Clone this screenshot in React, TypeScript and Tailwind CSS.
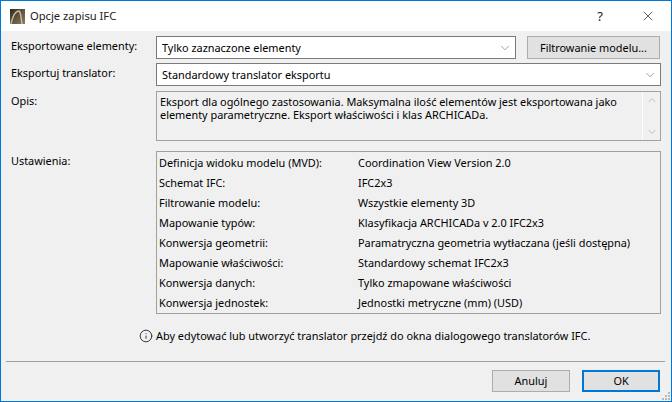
import { ChevronDown, ChevronUp, Info, X } from "lucide-react";

const settings = [
  ["Definicja widoku modelu (MVD):", "Coordination View Version 2.0"],
  ["Schemat IFC:", "IFC2x3"],
  ["Filtrowanie modelu:", "Wszystkie elementy 3D"],
  ["Mapowanie typów:", "Klasyfikacja ARCHICADa v 2.0 IFC2x3"],
  ["Konwersja geometrii:", "Paramatryczna geometria wytłaczana (jeśli dostępna)"],
  ["Mapowanie właściwości:", "Standardowy schemat IFC2x3"],
  ["Konwersja danych:", "Tylko zmapowane właściwości"],
  ["Konwersja jednostek:", "Jednostki metryczne (mm) (USD)"],
];

function Combo({ value, className }: { value: string; className: string }) {
  return (
    <div className={`h-[23px] bg-white border border-[#7a7a7a] flex items-center justify-between pl-[5px] pr-[3px] ${className}`}>
      <span>{value}</span>
      <ChevronDown size={14} strokeWidth={1} className="text-[#606060]" />
    </div>
  );
}

export default function App() {
  return (
    <div className="w-[672px] h-[402px] border border-[#0078d7] bg-[#f0f0f0] flex flex-col text-[10.9px] leading-4 text-black font-['Noto_Sans',sans-serif] overflow-hidden relative">
      {/* Title bar */}
      <div className="h-[30px] bg-white flex items-center shrink-0">
        <svg width="15" height="15" viewBox="0 0 15 15" className="ml-[9px]">
          <defs>
            <linearGradient id="logo" x1="0" y1="0" x2="1" y2="1">
              <stop offset="0" stopColor="#2e2a20" />
              <stop offset="1" stopColor="#8f7d5c" />
            </linearGradient>
          </defs>
          <rect width="15" height="15" fill="url(#logo)" />
          <path d="M1 15 C3 6 6 2 9 2 C11 3 11 9 12 15" fill="none" stroke="#c9bc9e" strokeWidth="1.4" />
        </svg>
        <span className="ml-[5px] text-[11.2px] text-[#222]">Opcje zapisu IFC</span>
        <span className="ml-auto mr-[37px] text-[13px] text-[#222]">?</span>
        <X size={16} strokeWidth={1} className="mr-[15px] text-[#111]" />
      </div>

      {/* Form */}
      <div className="flex flex-col pl-[10px] pr-[10px] pt-[5px]">
        <div className="flex">
          <span className="w-[145px] shrink-0 pt-[2px]">Eksportowane elementy:</span>
          <Combo value="Tylko zaznaczone elementy" className="w-[360px]" />
          <button className="ml-[11px] w-[133px] h-[23px] bg-[#e1e1e1] border border-[#adadad]">Filtrowanie modelu...</button>
        </div>
        <div className="flex mt-[4px]">
          <span className="w-[145px] shrink-0 pt-[2px]">Eksportuj translator:</span>
          <Combo value="Standardowy translator eksportu" className="w-[505px]" />
        </div>
        <div className="flex mt-[5px]">
          <span className="w-[145px] shrink-0 pt-[2px]">Opis:</span>
          <div className="w-[505px] h-[50px] border border-[#a0a0a0] flex">
            <p className="flex-1 pl-[3px] pt-[3px] leading-[13px]">
              Eksport dla ogólnego zastosowania. Maksymalna ilość elementów jest eksportowana jako elementy parametryczne. Eksport właściwości i klas ARCHICADa.
            </p>
            <div className="w-[18px] shrink-0 border-l border-white flex flex-col items-center justify-between py-[2px] text-[#b0b0b0]">
              <ChevronUp size={12} strokeWidth={1.5} />
              <ChevronDown size={12} strokeWidth={1.5} />
            </div>
          </div>
        </div>
        <div className="flex mt-[10px]">
          <span className="w-[145px] shrink-0 pt-[2px]">Ustawienia:</span>
          <div className="w-[505px] h-[163px] border border-[#a0a0a0] pt-[1px] pl-[2px]">
            {settings.map(([name, value]) => (
              <div key={name} className="flex items-center h-[20px]">
                <span className="w-[199px] shrink-0">{name}</span>
                <span>{value}</span>
              </div>
            ))}
          </div>
        </div>
        <div className="flex items-center mt-[14px] ml-[128px] h-[16px]">
          <Info size={14} strokeWidth={1.5} className="text-[#222] mr-[3px]" />
          <span>Aby edytować lub utworzyć translator przejdź do okna dialogowego translatorów IFC.</span>
        </div>
      </div>

      {/* Footer */}
      <div className="ml-[5px] mr-[6px] mt-[17px] border-t border-[#a0a0a0]" />
      <div className="flex justify-end gap-[12px] pt-[8px] pr-[11px]">
        <button className="w-[78px] h-[22px] bg-[#e1e1e1] border border-[#adadad]">Anuluj</button>
        <button className="w-[78px] h-[22px] bg-[#e1e1e1] border-2 border-[#0078d7]">OK</button>
      </div>
      <svg width="10" height="10" viewBox="0 0 10 10" className="absolute right-0 bottom-0 text-[#b8b8b8]" fill="currentColor">
        <rect x="7" y="1" width="2" height="2" />
        <rect x="4" y="4" width="2" height="2" />
        <rect x="7" y="4" width="2" height="2" />
        <rect x="1" y="7" width="2" height="2" />
        <rect x="4" y="7" width="2" height="2" />
        <rect x="7" y="7" width="2" height="2" />
      </svg>
    </div>
  );
}
